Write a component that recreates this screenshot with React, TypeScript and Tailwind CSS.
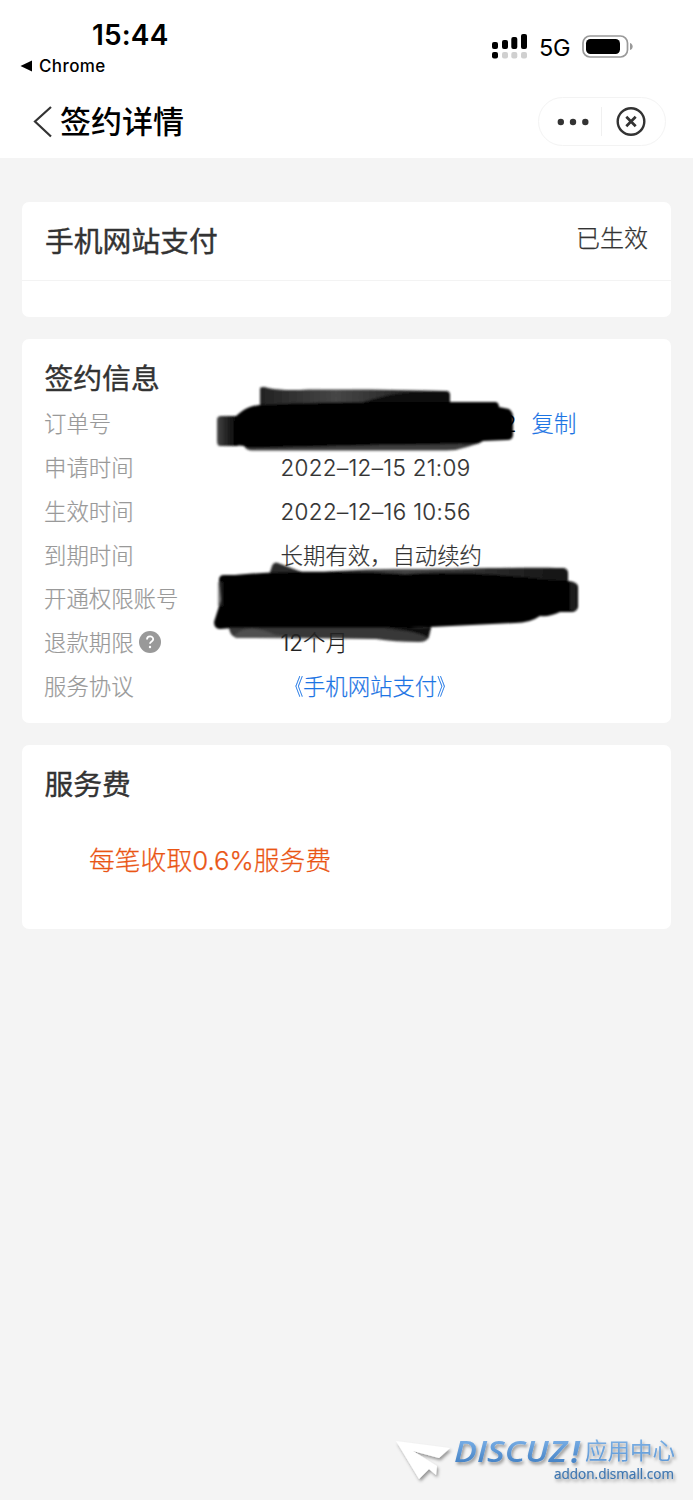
import React from "react";

const CJK = "font-['Inter','Noto_Sans_CJK_SC',sans-serif]";

function StatusBar() {
  return (
    <div className="flex h-[86px] items-start justify-between pl-[20px] pr-[59px] text-black">
      <div className="flex flex-col">
        <span className="mt-[18px] pl-[72px] font-['Inter'] text-[28px] leading-[34px] font-semibold tracking-[0.15px]">
          15:44
        </span>
        <span className="mt-[4px] flex items-center gap-[6px] font-['Inter'] text-[17px] leading-[20px] font-medium tracking-[0.4px]">
          <svg width="13" height="12" viewBox="0 0 13 12">
            <path d="M.5 6 12 .5v11z" fill="#000" />
          </svg>
          Chrome
        </span>
      </div>
      <div className="mt-[34px] flex h-[26px] items-start">
        <svg width="36" height="26" viewBox="0 0 36 26">
          <g fill="#000">
            <rect x="0" y="8" width="6" height="7" rx="2" />
            <rect x="10" y="6" width="6" height="9" rx="2" />
            <rect x="19.3" y="3" width="6" height="12" rx="2" />
            <rect x="29" y="0" width="6" height="15" rx="2" />
            <rect x="0" y="18" width="6" height="6.5" rx="2" />
          </g>
          <g fill="#d0d0d0">
            <rect x="10" y="18" width="6" height="6.5" rx="2" />
            <rect x="19.3" y="18" width="6" height="6.5" rx="2" />
            <rect x="29" y="18" width="6" height="6.5" rx="2" />
          </g>
        </svg>
        <span className="ml-[11px] w-[43px] font-['Inter'] text-[23.5px] leading-[28px] tracking-[-0.3px]">5G</span>
        <svg width="52" height="26" viewBox="0 0 52 26">
          <rect x="1" y="2" width="44.5" height="21" rx="7" fill="none" stroke="#999" strokeWidth="1.7" />
          <rect x="4" y="5" width="34" height="15" rx="4.5" fill="#000" />
          <path d="M48 9c3.600 1 3.600 6 0 7z" fill="#999" />
        </svg>
      </div>
    </div>
  );
}

function NavBar() {
  return (
    <header className="flex h-[72px] items-start justify-between pl-[33px] pr-[27px]">
      <div className="flex items-center pt-[16px]">
        <svg width="20" height="34" viewBox="0 0 20 34" fill="none">
          <path d="M18 2 2 16.500 18 31.500" stroke="#333" strokeWidth="2.200" />
        </svg>
        <h1 className="ml-[7px] text-[31px] leading-[40px] font-medium text-black">签约详情</h1>
      </div>
      <div className="mt-[11px] flex h-[49px] w-[128px] items-center rounded-full border border-[#f3f3f3]">
        <svg width="126" height="47" viewBox="0 0 126 47">
          <g fill="#333">
            <circle cx="21.800" cy="24" r="3.200" />
            <circle cx="34" cy="24" r="3.200" />
            <circle cx="46.300" cy="24" r="3.200" />
          </g>
          <path d="M62.500 9v29" stroke="#f0f0f0" />
          <circle cx="92" cy="23.500" r="13.300" fill="none" stroke="#333" strokeWidth="2.400" />
          <path d="m87.300 18.800 9.400 9.400m0-9.400-9.400 9.400" stroke="#333" strokeWidth="2.700" />
        </svg>
      </div>
    </header>
  );
}

function Row({ label, help, children }: { label: string; help?: boolean; children?: React.ReactNode }) {
  return (
    <div className="flex h-[43.75px] items-center text-[22.4px] leading-[30px] font-light [-webkit-text-stroke:0.2px_currentColor]">
      <dt className="flex w-[236.5px] shrink-0 items-center text-[#999]">
        {label}
        {help && (
          <svg className="ml-[5px] mb-[2px]" width="22" height="22" viewBox="0 0 22 22">
            <circle cx="11" cy="11" r="11" fill="#999" />
            <path d="M8 8.500c0-4 6.200-4 6.200-.3 0 2.300-3.200 2.300-3.200 4.600" fill="none" stroke="#fff" strokeWidth="1.800" />
            <circle cx="11" cy="16" r="1.200" fill="#fff" />
          </svg>
        )}
      </dt>
      <dd className="flex items-center whitespace-nowrap text-[#333]">{children}</dd>
    </div>
  );
}

function Scribbles() {
  return (
    <svg
      className="pointer-events-none absolute top-[41px] left-[188px]"
      width="375"
      height="270"
      viewBox="210 380 375 270"
    >
      <defs>
        <filter id="soft" x="-5%" y="-10%" width="110%" height="120%">
          <feGaussianBlur stdDeviation="0.9" />
        </filter>
        <linearGradient id="shade" x1="0" x2="1">
          <stop offset="0" stopColor="#222" />
          <stop offset=".4" stopColor="#464646" />
          <stop offset="1" stopColor="#111" />
        </linearGradient>
        <linearGradient id="edge" x1="0" x2="1">
          <stop offset="0" stopColor="#444" />
          <stop offset="1" stopColor="#000" />
        </linearGradient>
      </defs>
      <g filter="url(#soft)">
        <path d="M260 388q3-2 8 0 16 3 40 1.500H370l76 1.500q4 0 4 4v12H260z" fill="url(#shade)" />
        <path d="M360 403c20-6 35-11 60-11h25q5 0 5 4v12h-90z" fill="#111" />
        <path d="M217 420q0-4 4-4h17v30h-18q-3 0-3-5z" fill="url(#edge)" />
        <path d="M244 443h236l-13 4q-10 3.500-20 3.500H252q-6 0-8-5z" fill="#3c3c3c" />
        <path d="M235 417c9-8 14-11 25-12 60-4 140-3 236-3q3 1 3 5l10 2q4 3 4 8v18q0 5-6 5l-24 1q-5 4-22 3l-80 1-130 3q-5 0-7-2l-10-1q-1-10 1-28z" fill="#000" />
        <path d="M271 569q2-8 7-6l32 12h-41z" fill="#292929" />
        <path d="M300 575c30-5 70-6 110-6 60 0 100-2 154-1q4 1 4 5v14H300z" fill="url(#shade)" />
        <path d="M229 628h202l-2 9q-2 5-10 5-25 0-43-3-70-1-138-1-8-1-9-10z" fill="#383838" />
        <path d="M234 636q12-14 42-1l30 3h-70z" fill="#505050" />
        <path d="M384 629q32 1 44 9l3-11z" fill="#111" />
        <path d="M219 580q0-5 5-5h11c40-4 120-4 170-1 50-3 90 0 145 6l18 1q10 1 10 6v20q-1 5-7 5h-11q-10 5-20 4-10 7-25 7l-105 5H232l-12 1q-6 0-6-7l7-22z" fill="#000" />
        <path d="M218 582h5v24h-5zM570 583h6v27h-6z" fill="#333" opacity=".6" />
      </g>
    </svg>
  );
}

function Watermark() {
  return (
    <svg className="absolute right-0 bottom-0" width="313" height="80" viewBox="0 0 313 80">
      <defs>
        <linearGradient id="brand" x1="0" y1="0" x2="0" y2="1">
          <stop offset=".2" stopColor="#78aee6" />
          <stop offset=".8" stopColor="#4784c6" />
        </linearGradient>
        <linearGradient id="caption" x1="0" y1="0" x2="0" y2="1">
          <stop offset="0" stopColor="#82b4e6" />
          <stop offset="1" stopColor="#5c97d6" />
        </linearGradient>
        <filter id="drop" x="-10%" y="-20%" width="125%" height="160%">
          <feDropShadow dx="1.500" dy="2.500" stdDeviation="1.500" floodColor="#000" floodOpacity=".38" />
        </filter>
      </defs>
      <g filter="url(#drop)">
        <path d="m16 21 54 7-11 10-26-7 24 15-1 9-7-6-10 10z" fill="#fff" />
        <text x="74" y="42" fill="url(#brand)" fontFamily="Open Sans" fontWeight="600" fontStyle="italic" fontSize="28" textLength="113" lengthAdjust="spacingAndGlyphs">
          DISCUZ
        </text>
        <text x="191" y="42.500" fill="url(#brand)" fontFamily="Open Sans" fontWeight="700" fontStyle="italic" fontSize="30">
          !
        </text>
        <text x="205" y="39" fill="url(#caption)" fontFamily="Noto Sans CJK SC" fontSize="22.500" fontWeight="400">
          应用中心
        </text>
        <text x="174" y="59" fill="#3d75af" stroke="#3d75af" strokeWidth=".2" fontFamily="Open Sans" fontSize="14.500" textLength="120" lengthAdjust="spacingAndGlyphs">
          addon.dismall.com
        </text>
      </g>
    </svg>
  );
}

export default function App() {
  return (
    <div className={`relative h-[1500px] w-[693px] overflow-hidden bg-[#f4f4f4] ${CJK}`}>
      <div className="h-[158px] bg-white">
        <StatusBar />
        <NavBar />
      </div>
      <main className="flex flex-col gap-[22px] px-[22px] pt-[44px] text-[#333]">
        <section className="h-[115px] rounded-[7px] bg-white">
          <div className="flex h-[79px] items-start justify-between border-b border-[#f3f3f3] px-[23px]">
            <h2 className="mt-[20px] text-[28.8px] leading-[40px] [-webkit-text-stroke:0.4px_currentColor]">手机网站支付</h2>
            <span className="mt-[20px] text-[24px] leading-[34px] font-light [-webkit-text-stroke:0.25px_currentColor]">已生效</span>
          </div>
        </section>

        <section className="relative h-[384px] rounded-[7px] bg-white px-[22px]">
          <Scribbles />
          <div className="relative">
            <h2 className="h-[63.500px] pt-[20px] pl-[0.5px] text-[28.8px] leading-[40px] [-webkit-text-stroke:0.4px_currentColor]">签约信息</h2>
            <dl>
              <Row label="订单号">
                <span className="w-[236px] text-right text-black">2</span>
                <a className="ml-[15px] text-[#1c74e4]">复制</a>
              </Row>
              <Row label="申请时间"><span className="tracking-[0.34px]">2022–12–15 21:09</span></Row>
              <Row label="生效时间"><span className="tracking-[0.37px]">2022–12–16 10:56</span></Row>
              <Row label="到期时间">长期有效，自动续约</Row>
              <Row label="开通权限账号" />
              <Row label="退款期限" help><span className="text-[#222]">12个月</span></Row>
              <Row label="服务协议">
                <a className="flex text-[#1c74e4]">
                  <span className="origin-right scale-x-75">《</span>
                  <span>手机网站支付</span>
                  <span className="origin-left scale-x-75">》</span>
                </a>
              </Row>
            </dl>
          </div>
        </section>

        <section className="h-[184px] rounded-[7px] bg-white px-[22px] pt-[20px]">
          <h2 className="pl-[0.5px] text-[28.8px] leading-[40px] [-webkit-text-stroke:0.4px_currentColor]">服务费</h2>
          <p className="mt-[38px] pl-[45px] text-[25.8px] leading-[36px] font-light text-[#ea5514] [-webkit-text-stroke:0.25px_currentColor]">每笔收取0.6%服务费</p>
        </section>
      </main>
      <Watermark />
    </div>
  );
}
